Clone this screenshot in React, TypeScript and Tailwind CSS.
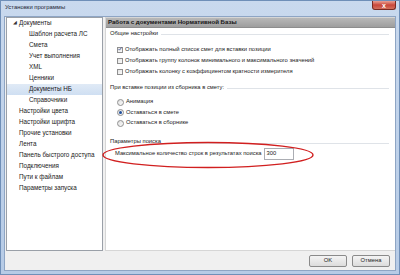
const font = "font-['Liberation_Sans',Arial,sans-serif]";

const tree: { label: string; level: number; selected?: boolean; open?: boolean }[] = [
    { label: "Документы", level: 0, open: true },
    { label: "Шаблон расчета ЛС", level: 1 },
    { label: "Смета", level: 1 },
    { label: "Учет выполнения", level: 1 },
    { label: "XML", level: 1 },
    { label: "Ценники", level: 1 },
    { label: "Документы НБ", level: 1, selected: true },
    { label: "Справочники", level: 1 },
    { label: "Настройки цвета", level: 0 },
    { label: "Настройки шрифта", level: 0 },
    { label: "Прочие установки", level: 0 },
    { label: "Лента", level: 0 },
    { label: "Панель быстрого доступа", level: 0 },
    { label: "Подключения", level: 0 },
    { label: "Пути к файлам", level: 0 },
    { label: "Параметры запуска", level: 0 },
];

const checks = [
    { label: "Отображать полный список смет для вставки позиции", checked: true },
    { label: "Отображать группу колонок минимального и максимального значений", checked: false },
    { label: "Отображать колонку с коэффициентом кратности измерителя", checked: false },
];

const radios = [
    { label: "Анимация", checked: false },
    { label: "Оставаться в смете", checked: true },
    { label: "Оставаться в сборнике", checked: false },
];

function GroupTitle({ title }: { title: string }) {
    return (
        <div className="flex h-[10px] items-center gap-[3px] pl-[4px] pr-[6px]">
            <span className="whitespace-nowrap text-[#222]">{title}</span>
            <div className="h-px flex-1 bg-[#dfe3e8]" />
        </div>
    );
}

function CheckBox({ checked }: { checked: boolean }) {
    return (
        <div className="flex h-[6px] w-[6px] items-center justify-center border border-[#8f8f8f] bg-gradient-to-br from-[#e4e4e4] to-[#fbfbfb]">
            {checked && (
                <svg width="6" height="6" viewBox="0 0 6 6" className="-mt-px">
                    <path d="M0.8 3.2 L2.3 4.7 L5.3 0.8" fill="none" stroke="#2b3d8c" strokeWidth="1.1" />
                </svg>
            )}
        </div>
    );
}

function Radio({ checked }: { checked: boolean }) {
    return (
        <div className="flex h-[7px] w-[7px] items-center justify-center rounded-full border border-[#8f8f8f] bg-gradient-to-br from-[#e0e0e0] to-[#fafafa]">
            {checked && <div className="h-[3px] w-[3px] rounded-full bg-[#1f4f9c]" />}
        </div>
    );
}

function Button({ children }: { children: React.ReactNode }) {
    return (
        <div className="flex h-[12px] w-[38px] items-center justify-center rounded-[2px] border border-[#8a8a8a] bg-gradient-to-b from-[#f4f4f4] to-[#dcdcdc] text-[5.8px] text-[#222]">
            {children}
        </div>
    );
}

export default function App() {
    return (
        <div className={`${font} relative flex h-[275px] w-[400px] flex-col overflow-hidden border border-[#6f8fb8] bg-gradient-to-b from-[#c9d9ee] to-[#b6cbe6] text-[6.3px] leading-none text-[#1a1a1a]`}>
            {/* title bar */}
            <div className="flex h-[15px] shrink-0 items-start justify-between pl-[4px]">
                <span className="mt-[4px] text-[5.9px] text-[#1e2633]">Установки программы</span>
                <div className="mr-[3px] flex h-[9px] w-[24px] items-center justify-center rounded-b-[3px] border border-t-0 border-[#7a2a22] bg-gradient-to-b from-[#e7a096] via-[#c9463a] to-[#d2705e]">
                    <span className="text-[7px] font-bold leading-none text-white">x</span>
                </div>
            </div>

            {/* client area */}
            <div className="mx-[3px] flex flex-1 flex-col border border-[#8ea5c4] bg-[#f0f0f0]">
                <div className="flex flex-1 gap-[2px]">
                    {/* tree */}
                    <div className="ml-px w-[97px] border border-[#9aa0a8] bg-white">
                        {tree.map((item) => (
                            <div
                                key={item.label}
                                className={`flex h-[11px] items-center whitespace-nowrap ${item.selected ? "bg-gradient-to-b from-[#e0eaf6] to-[#cfdff2]" : ""}`}
                            >
                                {item.level === 0 ? (
                                    <>
                                        <span className="flex w-[12px] justify-end pr-[2px] text-[4.5px] text-[#333]">
                                            {item.open ? "◢" : ""}
                                        </span>
                                        <span>{item.label}</span>
                                    </>
                                ) : (
                                    <span className="pl-[22px]">{item.label}</span>
                                )}
                            </div>
                        ))}
                    </div>

                    {/* right panel */}
                    <div className="relative flex flex-1 flex-col border border-r-0 border-[#d6d6d6] bg-white text-[5.8px]">
                        <div className="flex h-[10px] items-center border-b border-[#8d8d8d] bg-gradient-to-b from-[#b8b8b8] to-[#9e9e9e] pl-[2px] text-[6.1px] font-bold text-[#151515]">
                            Работа с документами Нормативной Базы
                        </div>

                        <div className="mt-[1px]">
                            <GroupTitle title="Общие настройки" />
                        </div>
                        <div className="mt-[5px] flex flex-col">
                            {checks.map((c) => (
                                <div key={c.label} className="flex h-[11px] items-center gap-[2px] pl-[11px]">
                                    <CheckBox checked={c.checked} />
                                    <span className="whitespace-nowrap">{c.label}</span>
                                </div>
                            ))}
                        </div>

                        <div className="mt-[6px]">
                            <GroupTitle title="При вставке позиции из сборника в смету:" />
                        </div>
                        <div className="mt-[4px] flex flex-col">
                            {radios.map((r) => (
                                <div key={r.label} className="flex h-[10.5px] items-center gap-[2px] pl-[11px]">
                                    <Radio checked={r.checked} />
                                    <span className="whitespace-nowrap">{r.label}</span>
                                </div>
                            ))}
                        </div>

                        <div className="mt-[6px] flex h-[10px] items-end pl-[4px] pr-[6px]">
                            <span className="whitespace-nowrap">Параметры поиска</span>
                            <div className="mb-px h-px flex-1 bg-[#dfe3e8]" />
                        </div>
                        <div className="mt-[3px] flex h-[12px] items-center gap-[2px] pl-[9px]">
                            <span className="whitespace-nowrap">Максимальное количество строк в результатах поиска</span>
                            <div className="flex h-[12px] w-[30px] items-center border border-[#abadb3] bg-white pl-[2px]">
                                300
                            </div>
                        </div>

                        {/* red annotation ellipse */}
                        <svg
                            className="pointer-events-none absolute left-[-5px] top-[123px]"
                            width="214"
                            height="28"
                            viewBox="0 0 214 28"
                        >
                            <ellipse cx="107" cy="14" rx="105" ry="12.5" fill="none" stroke="#d11f1f" strokeWidth="1.4" />
                        </svg>
                    </div>
                </div>

                {/* button bar */}
                <div className="flex h-[19px] shrink-0 items-center justify-end gap-[5px] pr-[5px] pt-px">
                    <Button>OK</Button>
                    <Button>Отмена</Button>
                </div>
            </div>
            <div className="h-[3px] shrink-0" />
        </div>
    );
}
